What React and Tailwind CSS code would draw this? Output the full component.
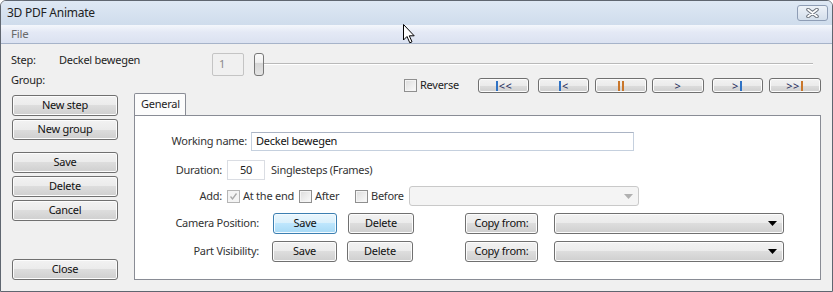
import React from "react";

const btn =
  "flex items-center justify-center rounded-[3px] border border-[#707070] bg-[linear-gradient(#f2f2f2,#ebebeb_50%,#dddddd_50%,#cfcfcf)] shadow-[inset_0_0_0_1px_#fcfcfc] text-[#111]";
const btnFocus =
  "flex items-center justify-center rounded-[3px] border border-[#3c7fb1] bg-[linear-gradient(#eaf6fd,#d9f0fc_50%,#bee6fd_50%,#a7d9f5)] shadow-[inset_0_0_0_1px_#f4fbff] text-[#111]";

function Check({ checked, disabled }) {
  return (
    <span
      className={`flex h-[13px] w-[13px] shrink-0 items-center justify-center border ${
        disabled ? "border-[#b5b5b5] bg-[#f4f4f4]" : "border-[#8f8f8f] bg-[linear-gradient(135deg,#dcdcdc,#fbfbfb)] shadow-[inset_0_0_0_1px_#f4f4f4]"
      }`}
    >
      {checked && (
        <svg width="9" height="9" viewBox="0 0 9 9">
          <path d="M1.5 4.5 L3.5 7 L7.5 1.5" fill="none" stroke="#a8a8a8" strokeWidth="1.3" />
        </svg>
      )}
    </span>
  );
}

function Combo({ w, disabled }) {
  if (disabled)
    return (
      <div className={`${w} flex h-[20px] items-center justify-end rounded-[3px] border border-[#c9c9c9] bg-[#f4f4f4] pr-[5px]`}>
        <svg width="9" height="5" viewBox="0 0 9 5">
          <path d="M0 0 H9 L4.5 5 Z" fill="#b0b0b0" />
        </svg>
      </div>
    );
  return (
    <div className={`${w} ${btn} !justify-end h-[21px] pr-[6px]`}>
      <svg width="9" height="5" viewBox="0 0 9 5">
        <path d="M0 0 H9 L4.5 5 Z" fill="#000" />
      </svg>
    </div>
  );
}

function Media({ w, ml, children }) {
  return <div className={`${w} ${ml} ${btn} h-[15px] text-[11px] leading-none tracking-[0.5px]`}>{children}</div>;
}

const Bar = ({ c }) => <span className={`mx-[1px] inline-block h-[10px] w-[2px] ${c}`} />;

export default function App() {
  return (
    <div className="relative flex h-[292px] w-[833px] flex-col overflow-hidden rounded-t-[6px] border border-[#5f6670] bg-[#f0f0f0] font-['Noto_Sans',sans-serif] text-[11px] tracking-[-0.25px] text-[#1e1e1e]">
      {/* title bar */}
      <div className="flex h-[24px] shrink-0 items-center justify-between bg-[linear-gradient(#dee8f4,#cfdcec)] pl-[6px] pr-[4px]">
        <span className="text-[12px] text-[#222]">3D PDF Animate</span>
        <div className="flex h-[16px] w-[31px] items-center justify-center rounded-[3px] border border-[#8e9db5] bg-[linear-gradient(#edf2f8,#d3deeb)]">
          <svg width="13" height="10" viewBox="0 0 13 10">
            <path d="M2 1.5 L11 8.5 M11 1.5 L2 8.5" stroke="#6c737d" strokeWidth="3.6" strokeLinecap="round" />
            <path d="M2 1.5 L11 8.5 M11 1.5 L2 8.5" stroke="#fff" strokeWidth="1.6" strokeLinecap="round" />
          </svg>
        </div>
      </div>

      {/* menu bar */}
      <div className="flex h-[19px] shrink-0 items-center border-b border-[#a6b3c9] bg-[linear-gradient(#f4f7fc,#e4e9f5_40%,#dbe2f1)] pl-[10px]">
        <span className="text-[11.5px] text-[#6a6a6a]">File</span>
      </div>

      {/* top section */}
      <div className="flex pt-[6px]">
        <div className="w-[211px] pl-[10px]">
          <div className="flex h-[20px] items-center">
            <span className="w-[48px]">Step:</span>
            <span>Deckel bewegen</span>
          </div>
          <div className="flex h-[20px] items-center">Group:</div>
        </div>
        <div className="flex w-[609px] flex-col">
          <div className="mt-[3px] flex h-[23px] items-center">
            <div className="flex h-[23px] w-[32px] items-center rounded-[2px] border border-[#c4c4c4] bg-[#f0f0f0] pl-[6px] text-[#8a8a8a]">
              1
            </div>
            <div className="ml-[10px] flex h-[23px] w-[10px] rounded-[3px] border border-[#777] bg-[linear-gradient(#fafafa,#f0f0f0_40%,#d6d6d6_45%,#e4e4e4)]" />
            <div className="flex h-[3px] w-[549px] flex-col">
              <div className="h-[1px] bg-[#b9b9b9]" />
              <div className="h-[1px] bg-[#ffffff]" />
            </div>
          </div>
          <div className="mt-[2px] flex h-[15px] items-center">
            <div className="ml-[192px] flex w-[74px] items-center">
              <Check />
              <span className="ml-[3px]">Reverse</span>
            </div>
            <Media w="w-[51px]" ml="">
              <Bar c="bg-[#2f72c4]" />
              <span className="text-[#1c2a5a]">&lt;&lt;</span>
            </Media>
            <Media w="w-[51px]" ml="ml-[9px]">
              <Bar c="bg-[#2f72c4]" />
              <span className="text-[#1c2a5a]">&lt;</span>
            </Media>
            <Media w="w-[52px]" ml="ml-[6px]">
              <Bar c="bg-[#c9772c]" />
              <Bar c="bg-[#c9772c]" />
            </Media>
            <Media w="w-[52px]" ml="ml-[5px]">
              <span className="text-[#1c2a5a]">&gt;</span>
            </Media>
            <Media w="w-[51px]" ml="ml-[8px]">
              <span className="text-[#1c2a5a]">&gt;</span>
              <Bar c="bg-[#2f72c4]" />
            </Media>
            <Media w="w-[52px]" ml="ml-[6px]">
              <span className="text-[#1c2a5a]">&gt;&gt;</span>
              <Bar c="bg-[#c9772c]" />
            </Media>
          </div>
        </div>
      </div>

      {/* main */}
      <div className="flex flex-1">
        <div className="flex w-[133px] flex-col pl-[11px] pt-[2px]">
          <div className={`${btn} h-[21px] w-[106px]`}>New step</div>
          <div className={`${btn} mt-[3px] h-[21px] w-[106px]`}>New group</div>
          <div className={`${btn} mt-[12px] h-[21px] w-[106px]`}>Save</div>
          <div className={`${btn} mt-[3px] h-[21px] w-[106px]`}>Delete</div>
          <div className={`${btn} mt-[3px] h-[21px] w-[106px]`}>Cancel</div>
          <div className={`${btn} mt-[38px] h-[21px] w-[106px]`}>Close</div>
        </div>

        <div className="flex w-[687px] flex-col">
          <div className="flex h-[22px] w-[52px] items-center rounded-t-[2px] border border-b-0 border-[#898c95] bg-[#fcfcfc] pl-[6px]">
            General
          </div>
          <div className="flex h-[165px] flex-col border border-[#898c95] bg-white">
            {/* working name */}
            <div className="mt-[16px] flex h-[19px] items-center">
              <span className="w-[112px] text-right text-[#333]">Working name:</span>
              <div className="ml-[4px] flex h-[19px] w-[383px] items-center border border-[#c5d0de] border-t-[#abb4c4] pl-[4px] text-[#111]">
                Deckel bewegen
              </div>
            </div>
            {/* duration */}
            <div className="mt-[9px] flex h-[20px] items-center">
              <span className="w-[87px] text-right text-[#333]">Duration:</span>
              <div className="ml-[5px] flex h-[20px] w-[38px] items-center justify-center border border-[#dadde3]">50</div>
              <span className="ml-[6px] text-[#333]">Singlesteps (Frames)</span>
            </div>
            {/* add */}
            <div className="mt-[6px] flex h-[20px] items-center">
              <span className="w-[87px] text-right text-[#333]">Add:</span>
              <div className="ml-[5px] flex w-[72px] items-center">
                <Check checked disabled />
                <span className="ml-[3px] text-[#333]">At the end</span>
              </div>
              <div className="flex w-[56px] items-center">
                <Check />
                <span className="ml-[3px] text-[#333]">After</span>
              </div>
              <div className="flex w-[54px] items-center">
                <Check />
                <span className="ml-[3px] text-[#333]">Before</span>
              </div>
              <Combo w="w-[230px]" disabled />
            </div>
            {/* camera */}
            <div className="mt-[7px] flex h-[21px] items-center">
              <span className="w-[124px] text-right text-[#333]">Camera Position:</span>
              <div className={`${btnFocus} ml-[14px] h-[21px] w-[64px]`}>Save</div>
              <div className={`${btn} ml-[11px] h-[21px] w-[66px]`}>Delete</div>
              <div className={`${btn} ml-[51px] h-[21px] w-[73px]`}>Copy from:</div>
              <div className="ml-[16px]">
                <Combo w="w-[230px]" />
              </div>
            </div>
            {/* part visibility */}
            <div className="mt-[7px] flex h-[21px] items-center">
              <span className="w-[124px] text-right text-[#333]">Part Visibility:</span>
              <div className={`${btn} ml-[13px] h-[21px] w-[65px]`}>Save</div>
              <div className={`${btn} ml-[10px] h-[21px] w-[66px]`}>Delete</div>
              <div className={`${btn} ml-[52px] h-[21px] w-[73px]`}>Copy from:</div>
              <div className="ml-[16px]">
                <Combo w="w-[230px]" />
              </div>
            </div>
          </div>
        </div>
      </div>

      {/* mouse pointer */}
      <svg className="absolute left-[402px] top-[23px]" width="13" height="20" viewBox="0 0 13 20">
        <path d="M0.5 0.5 V16 L4 12.5 L6.8 18.8 L9 17.8 L6.3 11.8 H11.2 Z" fill="#fff" stroke="#000" strokeWidth="1" strokeLinejoin="round" />
      </svg>
    </div>
  );
}
